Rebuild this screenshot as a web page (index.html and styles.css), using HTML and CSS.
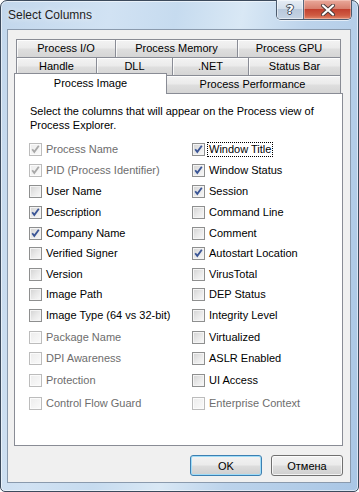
FILE: index.html
```html
<!DOCTYPE html>
<html>
<head>
<meta charset="utf-8">
<title>Select Columns</title>
<link rel="stylesheet" href="styles.css">
</head>
<body>
<div class="window">
  <div class="titlebar">
    <span class="title">Select Columns</span>
    <div class="caption-btns">
      <div class="cbtn help">?</div>
      <div class="cbtn close">
        <svg width="16" height="12" viewBox="0 0 16 12">
          <path d="M3 1.5 L13 10.5 M13 1.5 L3 10.5" stroke="#4a3b3b" stroke-width="4" stroke-linecap="round" fill="none"/>
          <path d="M3 1.5 L13 10.5 M13 1.5 L3 10.5" stroke="#ffffff" stroke-width="2.2" stroke-linecap="round" fill="none"/>
        </svg>
      </div>
    </div>
  </div>
  <div class="client">
    <div class="tabs">
      <div class="tabrow">
        <div class="tab t-io">Process I/O</div>
        <div class="tab t-mem">Process Memory</div>
        <div class="tab t-gpu">Process GPU</div>
      </div>
      <div class="tabrow">
        <div class="tab t-handle">Handle</div>
        <div class="tab t-dll">DLL</div>
        <div class="tab t-net">.NET</div>
        <div class="tab t-status">Status Bar</div>
      </div>
      <div class="tabrow">
        <div class="tab t-image selected">Process Image</div>
        <div class="tab t-perf">Process Performance</div>
      </div>
    </div>
    <div class="panel">
      <p class="intro">Select the columns that will appear on the Process view of<br>Process Explorer.</p>
      <div class="grid">
        <label class="cb disabled checked"><span class="box"><svg viewBox="0 0 11 11"><path d="M2.2 5.2 L4.3 7.9 L8.8 1.8"/></svg></span><span class="lbl">Process Name</span></label>
        <label class="cb checked"><span class="box"><svg viewBox="0 0 11 11"><path d="M2.2 5.2 L4.3 7.9 L8.8 1.8"/></svg></span><span class="lbl focus">Window Title</span></label>

        <label class="cb disabled checked"><span class="box"><svg viewBox="0 0 11 11"><path d="M2.2 5.2 L4.3 7.9 L8.8 1.8"/></svg></span><span class="lbl">PID (Process Identifier)</span></label>
        <label class="cb checked"><span class="box"><svg viewBox="0 0 11 11"><path d="M2.2 5.2 L4.3 7.9 L8.8 1.8"/></svg></span><span class="lbl">Window Status</span></label>

        <label class="cb"><span class="box"></span><span class="lbl">User Name</span></label>
        <label class="cb checked"><span class="box"><svg viewBox="0 0 11 11"><path d="M2.2 5.2 L4.3 7.9 L8.8 1.8"/></svg></span><span class="lbl">Session</span></label>

        <label class="cb checked"><span class="box"><svg viewBox="0 0 11 11"><path d="M2.2 5.2 L4.3 7.9 L8.8 1.8"/></svg></span><span class="lbl">Description</span></label>
        <label class="cb"><span class="box"></span><span class="lbl">Command Line</span></label>

        <label class="cb checked"><span class="box"><svg viewBox="0 0 11 11"><path d="M2.2 5.2 L4.3 7.9 L8.8 1.8"/></svg></span><span class="lbl">Company Name</span></label>
        <label class="cb"><span class="box"></span><span class="lbl">Comment</span></label>

        <label class="cb"><span class="box"></span><span class="lbl">Verified Signer</span></label>
        <label class="cb checked"><span class="box"><svg viewBox="0 0 11 11"><path d="M2.2 5.2 L4.3 7.9 L8.8 1.8"/></svg></span><span class="lbl">Autostart Location</span></label>

        <label class="cb"><span class="box"></span><span class="lbl">Version</span></label>
        <label class="cb"><span class="box"></span><span class="lbl">VirusTotal</span></label>

        <label class="cb"><span class="box"></span><span class="lbl">Image Path</span></label>
        <label class="cb"><span class="box"></span><span class="lbl">DEP Status</span></label>

        <label class="cb"><span class="box"></span><span class="lbl">Image Type (64 vs 32-bit)</span></label>
        <label class="cb"><span class="box"></span><span class="lbl">Integrity Level</span></label>

        <label class="cb disabled"><span class="box"></span><span class="lbl">Package Name</span></label>
        <label class="cb"><span class="box"></span><span class="lbl">Virtualized</span></label>

        <label class="cb disabled"><span class="box"></span><span class="lbl">DPI Awareness</span></label>
        <label class="cb"><span class="box"></span><span class="lbl">ASLR Enabled</span></label>

        <label class="cb disabled"><span class="box"></span><span class="lbl">Protection</span></label>
        <label class="cb"><span class="box"></span><span class="lbl">UI Access</span></label>

        <label class="cb disabled"><span class="box"></span><span class="lbl">Control Flow Guard</span></label>
        <label class="cb disabled"><span class="box"></span><span class="lbl">Enterprise Context</span></label>
      </div>
    </div>
    <div class="buttons">
      <button class="btn default">OK</button>
      <button class="btn">Отмена</button>
    </div>
  </div>
</div>
</body>
</html>
```

FILE: styles.css
```css
* { box-sizing: border-box; }
html, body { margin: 0; padding: 0; }
body {
  width: 359px;
  height: 492px;
  overflow: hidden;
  background: #ffffff;
  font-family: "Liberation Sans", Arial, sans-serif;
  font-size: 11px;
  color: #000;
}

.window {
  width: 359px;
  height: 492px;
  border: 1px solid #3c4a5c;
  border-radius: 7px 7px 5px 5px;
  background:
    linear-gradient(100deg, #c2d7ec 0%, #d1e2f3 25%, #c6dbef 40%, #d9e8f5 55%, #bcd3eb 70%, #b3cde8 85%, #a9c6e5 100%);
  box-shadow: inset 0 0 0 1px rgba(255,255,255,0.55);
  display: flex;
  flex-direction: column;
}

.titlebar {
  height: 28px;
  display: flex;
  align-items: flex-start;
}
.title {
  padding-left: 7px;
  padding-top: 7px;
  font-size: 12px;
  line-height: 15px;
  color: #1e1e1e;
  text-shadow: 0 0 6px rgba(255,255,255,0.9);
}
.caption-btns {
  margin-left: auto;
  margin-right: 6px;
  margin-top: -1px;
  display: flex;
  height: 20px;
  border: 1px solid #4c5b6e;
  border-top: none;
  border-radius: 0 0 5px 5px;
  overflow: hidden;
  box-shadow: 0 1px 0 rgba(255,255,255,0.6);
}
.cbtn {
  height: 19px;
  display: flex;
  align-items: center;
  justify-content: center;
}
.help {
  width: 27px;
  border-right: 1px solid #5a6a80;
  background: linear-gradient(#e6edf5 0%, #d4dfeb 45%, #b9c9dc 50%, #c5d4e4 100%);
  box-shadow: inset 0 0 0 1px rgba(255,255,255,0.5);
  color: #fff;
  font-family: "DejaVu Sans", sans-serif;
  font-weight: bold;
  font-size: 13px;
  text-shadow: 0 0 1px #3d4a5a, 1px 0 0 #3d4a5a, -1px 0 0 #3d4a5a, 0 1px 0 #3d4a5a, 0 -1px 0 #3d4a5a;
}
.close {
  width: 47px;
  background: linear-gradient(#e9a99b 0%, #d8806f 45%, #c2412f 50%, #cf5a42 80%, #e0866a 100%);
  box-shadow: inset 0 0 0 1px rgba(255,220,210,0.45);
}

.client {
  margin: 0 7px 8px 6px;
  height: 454px;
  border: 1px solid #8a9aad;
  background: #f0f0f0;
  display: flex;
  flex-direction: column;
}

.tabs {
  margin-top: 9px;
  margin-left: 8px;
  width: 325px;
}
.tabrow {
  display: flex;
  height: 18px;
}
.tab {
  height: 18px;
  border: 1px solid #898c95;
  border-bottom: none;
  background: linear-gradient(#f3f3f3 0%, #ebebeb 45%, #dedede 55%, #d5d5d5 100%);
  box-shadow: inset 1px 1px 0 rgba(255,255,255,0.8);
  text-align: center;
  line-height: 17px;
  white-space: nowrap;
  margin-left: -1px;
}
.tab:first-child { margin-left: 0; }

.t-io { width: 100px; }
.t-mem { width: 123px; }
.t-gpu { width: 104px; }
.t-handle { width: 81px; }
.t-dll { width: 77px; }
.t-net { width: 77px; }
.t-status { width: 93px; }
.t-image { width: 149px; }
.t-perf { width: 177px; }

.tab.selected {
  position: relative;
  z-index: 1;
  width: 153px;
  height: 21px;
  margin: -2px -2px 0 -2px;
  padding-bottom: 2px;
  line-height: 18px;
  background: #ffffff;
  box-shadow: none;
}

.panel {
  margin-left: 6px;
  width: 329px;
  height: 353px;
  border: 1px solid #898c95;
  background: #ffffff;
  padding: 10px 14px 0 14px;
}
.intro {
  margin: 0 0 0 1px;
  line-height: 14px;
}

.grid {
  margin-top: 6px;
  display: grid;
  grid-template-columns: 163px 1fr;
  grid-template-rows: 22px 21px 21px 21px 20px 21px 20px 21px 21px 22px 21px 23px 23px;
}
.cb {
  display: flex;
  align-items: center;
  gap: 4px;
  white-space: nowrap;
}
.box {
  width: 13px;
  height: 13px;
  flex: none;
  border: 1px solid #8e8f8f;
  background: linear-gradient(135deg, #d2d2d2 0%, #e8e8e8 50%, #f9f9f9 100%);
  box-shadow: inset 0 0 0 1px #f4f4f4;
  display: flex;
}
.box svg {
  width: 11px;
  height: 11px;
}
.box path {
  fill: none;
  stroke: #3a5596;
  stroke-width: 1.8;
}
.lbl {
  line-height: 13px;
  padding: 0 1px;
  margin-left: -1px;
}
.lbl.focus {
  outline: 1px dotted #000;
  outline-offset: 0;
}

.cb.disabled .box {
  border-color: #bcbcbc;
  background: linear-gradient(135deg, #ececec, #fafafa);
  box-shadow: inset 0 0 0 1px #fbfbfb;
}
.cb.disabled .box path { stroke: #a8a8a8; }
.cb.disabled .lbl { color: #6d6d6d; }

.buttons {
  margin-top: 9px;
  padding-right: 7px;
  display: flex;
  justify-content: flex-end;
  gap: 9px;
}
.btn {
  width: 72px;
  height: 21px;
  padding: 0;
  border: 1px solid #707070;
  border-radius: 3px;
  background: linear-gradient(#f2f2f2 0%, #ebebeb 48%, #dddddd 52%, #cfcfcf 100%);
  box-shadow: inset 0 0 0 1px rgba(255,255,255,0.75);
  font-family: "Liberation Sans", Arial, sans-serif;
  font-size: 11px;
  color: #000;
}
.btn.default {
  border-color: #3c7fb1;
  box-shadow: inset 0 0 0 1px #9fdcf8;
  background: linear-gradient(#f2f2f2 0%, #ebebeb 48%, #dddddd 52%, #cfcfcf 100%);
}
```
